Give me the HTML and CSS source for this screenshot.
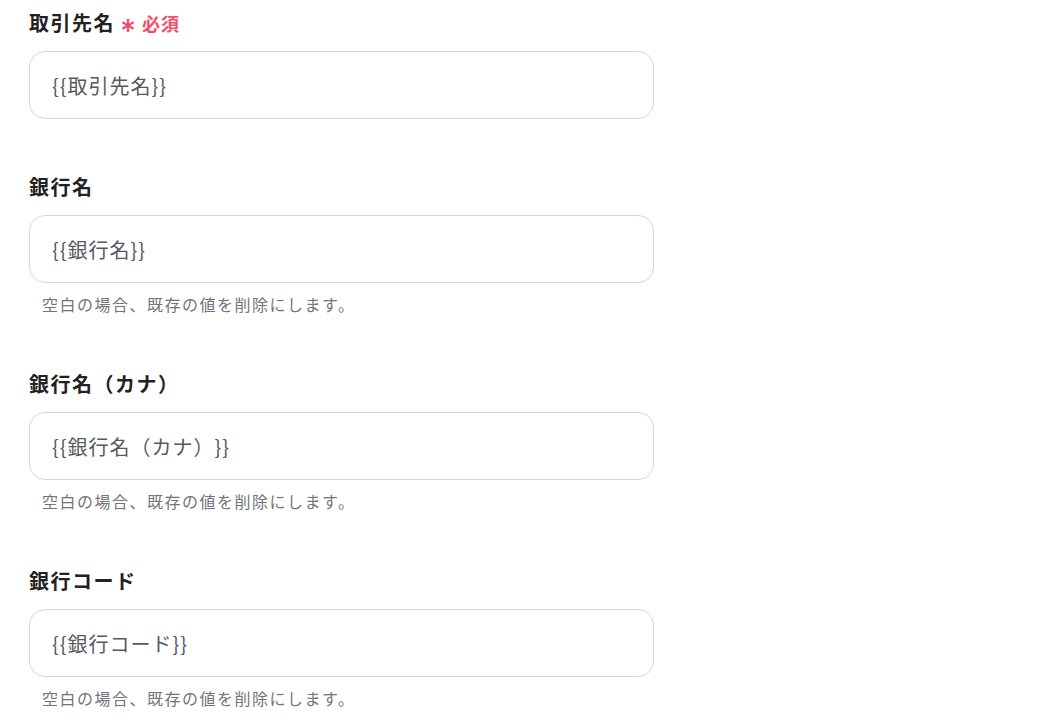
FILE: index.html
```html
<!DOCTYPE html>
<html lang="ja">
<head>
<meta charset="utf-8">
<link rel="stylesheet" href="styles.css">
</head>
<body>
<div class="form">
  <div class="field">
    <div class="label">取引先名<span class="req"><svg class="star" width="14" height="13" viewBox="0 0 14 13"><g stroke="#f2506a" stroke-width="2.4" stroke-linecap="butt"><line x1="7" y1="0" x2="7" y2="13"/><line x1="1.4" y1="3.25" x2="12.6" y2="9.75"/><line x1="1.4" y1="9.75" x2="12.6" y2="3.25"/></g></svg>必須</span></div>
    <div class="input">{{取引先名}}</div>
  </div>
  <div class="field">
    <div class="label">銀行名</div>
    <div class="input">{{銀行名}}</div>
    <div class="help">空白の場合、既存の値を削除にします。</div>
  </div>
  <div class="field">
    <div class="label">銀行名（カナ）</div>
    <div class="input">{{銀行名（カナ）}}</div>
    <div class="help">空白の場合、既存の値を削除にします。</div>
  </div>
  <div class="field">
    <div class="label">銀行コード</div>
    <div class="input">{{銀行コード}}</div>
    <div class="help">空白の場合、既存の値を削除にします。</div>
  </div>
</div>
</body>
</html>
```
FILE: styles.css
```css
html, body {
  margin: 0;
  padding: 0;
  background: #ffffff;
}
body {
  font-family: "Noto Sans CJK JP", "Noto Sans", sans-serif;
  text-spacing-trim: space-all;
}
.form {
  padding: 11px 0 0 29px;
  width: 625px;
}
.field {
  margin-bottom: 56px;
}
.field:last-child {
  margin-bottom: 0;
}
.label {
  font-size: 20px;
  line-height: 24px;
  font-weight: 700;
  letter-spacing: 1.5px;
  color: #222222;
  margin-bottom: 16px;
  display: flex;
  align-items: center;
}
.req {
  display: inline-flex;
  align-items: center;
  color: #f2506a;
  font-size: 18px;
  letter-spacing: 1px;
  font-weight: 700;
}
.star {
  margin-left: 6px;
  margin-right: 7px;
  position: relative;
  top: 2px;
}
.input {
  box-sizing: border-box;
  height: 68px;
  border: 1px solid #d4d6da;
  border-radius: 16px;
  padding-left: 22px;
  display: flex;
  align-items: center;
  font-size: 20px;
  letter-spacing: 1px;
  color: #555a60;
}
.help {
  margin-top: 9px;
  padding-left: 13px;
  font-size: 16px;
  line-height: 24px;
  letter-spacing: 1.5px;
  color: #70757b;
}
```
